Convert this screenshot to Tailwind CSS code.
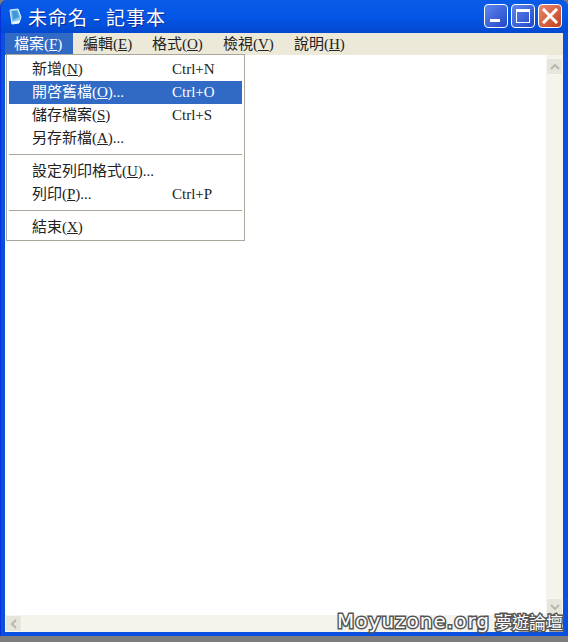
<!DOCTYPE html>
<html lang="zh-Hant">
<head>
    <meta charset="UTF-8">
    <meta name="viewport" content="width=device-width, initial-scale=1.0">
    <title>未命名 - 記事本</title>
    <script src="https://cdn.jsdelivr.net/npm/@tailwindcss/browser@4"></script>
</head>
<body class="w-[568px] h-[642px] overflow-hidden bg-[#7d7d7d] font-['Liberation_Serif','Noto_Sans_CJK_TC',serif]">
    <div class="relative w-[568px] h-[636px] flex flex-col rounded-t-[7px] bg-[#0a50e0] px-[5px] pb-[4px] border-l border-[#0831d9]">
        <!-- Title bar -->
        <div class="h-[33px] -mx-[5px] px-[7px] flex items-center shrink-0 rounded-t-[7px] bg-gradient-to-b from-[#0a5be6] via-[#0456e6] to-[#0348d0]">
            <svg class="w-[15px] h-[18px] shrink-0" viewBox="0 0 15 18">
                <path d="M2 2 L10 1 L13 9 L11 15 L4 16 Z" fill="#7fc4ec" stroke="#dff2fb" stroke-width="1"/>
                <path d="M4 3 L9 3 L11 9 L5 12 Z" fill="#3f98d8"/>
                <path d="M4 14 L11 12 L11 15 L4 16 Z" fill="#e8f5fb"/>
            </svg>
            <span class="ml-[5px] text-[19px] leading-none text-white tracking-[1px] font-['Noto_Sans_CJK_TC',sans-serif] [text-shadow:1px_1px_0_#0a2f9c]">未命名 - 記事本</span>
            <div class="ml-auto flex gap-[3px] mr-[-1px] mt-[-1px]">
                <div class="w-[24px] h-[24px] rounded-[4px] border border-white bg-gradient-to-br from-[#5f86ec] to-[#2346c8] flex items-end pl-[5px] pb-[5px]">
                    <div class="w-[10px] h-[3px] bg-white"></div>
                </div>
                <div class="w-[24px] h-[24px] rounded-[4px] border border-white bg-gradient-to-br from-[#5f86ec] to-[#2346c8] flex items-center justify-center">
                    <div class="w-[14px] h-[14px] border border-white border-t-[3px]"></div>
                </div>
                <div class="w-[24px] h-[24px] rounded-[4px] border border-white bg-gradient-to-br from-[#e58a6c] to-[#c33c17] flex items-center justify-center">
                    <svg class="w-[16px] h-[16px]" viewBox="0 0 16 16"><path d="M2 2 L14 14 M14 2 L2 14" stroke="#fff" stroke-width="3" stroke-linecap="square"/></svg>
                </div>
            </div>
        </div>

        <!-- Menu bar -->
        <div class="h-[22px] -ml-[1px] flex items-center shrink-0 bg-[#ece9d8] text-[15px] leading-none text-[#222]">
            <span class="h-full flex items-center w-[68px] pl-[9px] bg-[#316ac5] text-white">檔案(<u>F</u>)</span>
            <span class="ml-[10px] w-[69px]">編輯(<u>E</u>)</span>
            <span class="w-[71px]">格式(<u>O</u>)</span>
            <span class="w-[71px]">檢視(<u>V</u>)</span>
            <span>說明(<u>H</u>)</span>
        </div>

        <!-- Edit area with scrollbars -->
        <div class="flex-1 min-h-0 flex flex-col bg-white -ml-[1px]">
            <div class="flex-1 min-h-0 flex justify-end">
                <div class="w-[17px] flex flex-col justify-between bg-[#f4f3ec]">
                    <div class="w-[17px] h-[17px] mt-[3px] rounded-[2px] bg-[#e7e6dc] border border-[#f7f7f2] flex items-center justify-center">
                        <svg class="w-[10px] h-[8px]" viewBox="0 0 10 8"><path d="M1 6 L5 2 L9 6" fill="none" stroke="#b8b8ac" stroke-width="2"/></svg>
                    </div>
                    <div class="w-[17px] h-[17px] rounded-[2px] bg-[#e7e6dc] border border-[#f7f7f2] flex items-center justify-center">
                        <svg class="w-[10px] h-[8px]" viewBox="0 0 10 8"><path d="M1 2 L5 6 L9 2" fill="none" stroke="#b8b8ac" stroke-width="2"/></svg>
                    </div>
                </div>
            </div>
            <div class="h-[17px] shrink-0 flex items-center bg-[#f4f3ec] pr-[17px]">
                <div class="w-[17px] h-[17px] rounded-[2px] bg-[#e7e6dc] border border-[#f7f7f2] flex items-center justify-center">
                    <svg class="w-[8px] h-[10px]" viewBox="0 0 8 10"><path d="M6 1 L2 5 L6 9" fill="none" stroke="#b8b8ac" stroke-width="2"/></svg>
                </div>
            </div>
        </div>

        <!-- File menu -->
        <div class="absolute left-[5px] top-[54px] w-[239px] h-[187px] pt-[3px] px-[2px] bg-white border border-[#a9a79c] text-[15px] leading-none text-[#222]">
            <div class="h-[23px] flex items-center pl-[23px]"><span class="w-[140px]">新增(<u>N</u>)</span><span>Ctrl+N</span></div>
            <div class="h-[23px] flex items-center pl-[23px] bg-[#316ac5] text-white"><span class="w-[140px]">開啓舊檔(<u>O</u>)...</span><span>Ctrl+O</span></div>
            <div class="h-[23px] flex items-center pl-[23px]"><span class="w-[140px]">儲存檔案(<u>S</u>)</span><span>Ctrl+S</span></div>
            <div class="h-[23px] flex items-center pl-[23px]"><span>另存新檔(<u>A</u>)...</span></div>
            <div class="h-px my-[4px] bg-[#a9a79c]"></div>
            <div class="h-[23px] mt-[5px] flex items-center pl-[23px]"><span>設定列印格式(<u>U</u>)...</span></div>
            <div class="h-[23px] flex items-center pl-[23px]"><span class="w-[140px]">列印(<u>P</u>)...</span><span>Ctrl+P</span></div>
            <div class="h-px my-[4px] bg-[#a9a79c]"></div>
            <div class="h-[23px] mt-[5px] flex items-center pl-[23px]"><span>結束(<u>X</u>)</span></div>
        </div>

        <!-- Watermark -->
        <div class="absolute right-[5px] bottom-[5px] flex items-center gap-[5px] text-[20px] leading-none text-white font-['DejaVu_Sans','Noto_Sans_CJK_TC',sans-serif] [-webkit-text-stroke:3px_#555] [paint-order:stroke_fill]">
            <span class="tracking-[1px]">Moyuzone.org</span>
            <span class="text-[17px] font-['Noto_Sans_CJK_TC',sans-serif]">夢遊論壇</span>
        </div>
    </div>
</body>
</html>
